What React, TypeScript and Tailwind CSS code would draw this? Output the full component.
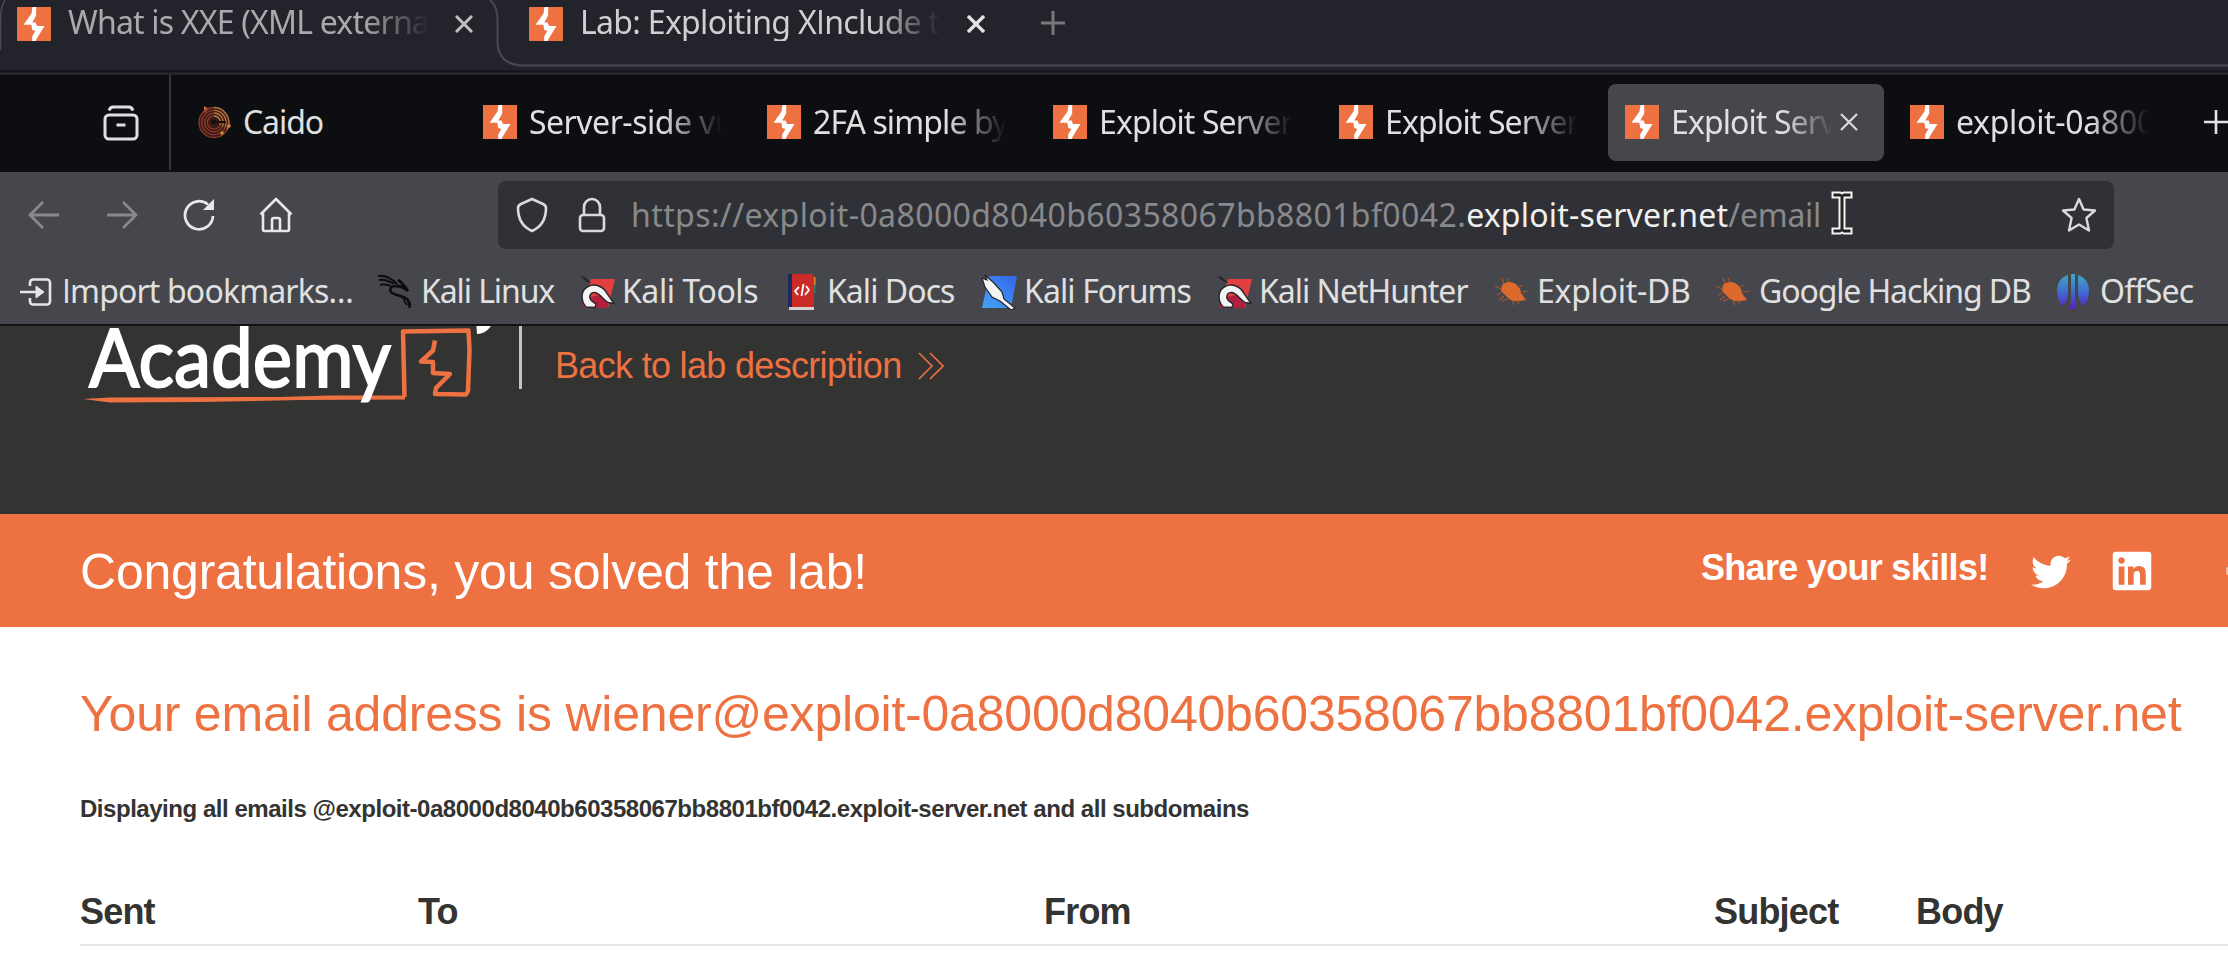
import React from "react";
import { FaTwitter, FaLinkedin } from "react-icons/fa";

function Burp({ className = "" }: { className?: string }) {
  return (
    <svg viewBox="0 0 34 34" className={"h-[34px] w-[34px] shrink-0 " + className}>
      <rect width="34" height="34" fill="#ee7142" />
      <path d="M15.500 0H19.200V8.500L15.300 15.500H18.600L20 19H27.500L19.800 31.500 18.600 34H15.200V29.500L18.400 24 15.300 23 14.300 17.800H6.500L14.500 6.500z" fill="#fff" />
    </svg>
  );
}

const X = ({ className, w = 3 }: { className: string; w?: number }) => (
  <svg viewBox="0 0 18 18" className={"h-[18px] w-[18px] shrink-0 " + className} fill="none" stroke="currentColor" strokeWidth={w}>
    <path d="M1 1l16 16M17 1L1 17" />
  </svg>
);

const Plus = ({ className, w = 2.4 }: { className: string; w?: number }) => (
  <svg viewBox="0 0 24 24" className={"h-6 w-6 shrink-0 " + className} fill="none" stroke="currentColor" strokeWidth={w}>
    <path d="M12 0v24M0 12h24" />
  </svg>
);

function Caido() {
  return (
    <svg viewBox="0 0 34 34" className="h-[34px] w-[34px] shrink-0" fill="none" strokeWidth="1.300">
      <circle cx="17" cy="17.500" r="15.500" fill="#3b1a17" />
      <path d="M7 1l5 3-5 4z" fill="#d06a3c" />
      <g stroke="#8c3a2b">
        <circle cx="17" cy="17.500" r="15" />
        <circle cx="17" cy="17.500" r="12.200" />
        <circle cx="17" cy="17.500" r="9.400" />
        <circle cx="17" cy="17.500" r="6.600" />
      </g>
      <path d="M17 2.500a15 15 0 0 1 13 22M17 5.300a12.200 12.200 0 0 1 11 17M17 8a9.400 9.400 0 0 1 8 14M17 11a6.600 6.600 0 0 1 6 9" stroke="#a8743f" />
      <circle cx="17" cy="17" r="2.500" fill="#111" />
      <path d="M20 16h9v2h-9z" fill="#15100e" />
      <circle cx="32" cy="21" r="1.800" fill="#c98a3c" />
      <circle cx="25" cy="28" r="1.800" fill="#c98a3c" />
    </svg>
  );
}

function Dragon() {
  return (
    <svg viewBox="0 0 36 36" className="h-9 w-9" fill="none" stroke="#0c0d10">
      <path d="M0 2c7-1 13 2 19 8M1 6c6-1 10 1 15 4M2 11c4-1 8 0 11 1" strokeWidth="2" />
      <path d="M20 6c4 2 6 5 10 11-4-4-7-5-12-5" strokeWidth="2.800" />
      <path d="M18 12c-5 0-7 3-5 6 3 4 13 3 17 8 1 2 1 5 2 8" strokeWidth="2.400" />
      <path d="M23 23c5 1 8 3 10 8M26 25c0 3 2 5 3 6" strokeWidth="1.800" />
    </svg>
  );
}

function KaliTools() {
  return (
    <svg viewBox="0 0 36 36" className="h-9 w-9">
      <path d="M11 5h24l-7 29H3z" fill="#e2403f" />
      <path d="M2 24l26-4v14H3z" fill="#b3203f" />
      <path d="M0 2l5 1 6 6-4-1z" fill="#23242a" />
      <path d="M6 33C0 26 1 16 8 12.500c8-4 16 1 19 7l7 10-6-1c-5-3-8-9-13-10-4-.5-6 3-5 6 1 3 4 4 6 5.500l-1 3.500z" fill="#f4f4f4" stroke="#26272c" strokeWidth="1.400" />
    </svg>
  );
}

function KaliDocs() {
  return (
    <svg viewBox="0 0 28 38" className="h-[38px] w-7">
      <path d="M0 1h4v33H0z" fill="#1e2a5e" />
      <path d="M4 1h20l2 2v31H4z" fill="#cb2a26" />
      <path d="M26 4h1.500v8H26z" fill="#d98a34" />
      <path d="M26 12h1.500v8H26z" fill="#3f7a5a" />
      <path d="M1 34h25v3H1z" fill="#d9cfcf" />
      <path d="M11 14l-4 4 3 4M18 13l3 4-4 5M15.500 11l-2 12" fill="none" stroke="#fff" strokeWidth="1.800" />
    </svg>
  );
}

function KaliForums() {
  return (
    <svg viewBox="0 0 36 36" className="h-9 w-9">
      <defs>
        <linearGradient id="kf" x1="0" y1="1" x2="1" y2="0">
          <stop offset="0" stopColor="#45a5f5" />
          <stop offset="1" stopColor="#3365e8" />
        </linearGradient>
      </defs>
      <path d="M7 2h28l-6 32H0z" fill="url(#kf)" />
      <path d="M0 4l5 2-2-5 9 8 8 9 2 7 11 9-4 2-11-9-8-4-7-10z" fill="#f4f4f4" stroke="#26272c" strokeWidth="1.200" />
    </svg>
  );
}

function Bug() {
  return (
    <svg viewBox="0 0 34 30" className="h-[30px] w-[34px]">
      <path d="M7 8c4-4 10-4 15 0l3 4 1 4 5 7-6 1c-6 1-11-1-14-5l-5-5z" fill="#dd6a2c" />
      <path d="M9 7L7 1M14 5L12 1M24 10l4-2M27 15l6-1M6 12l-6-3M6 16l-4 2M9 19l-5 4M13 22l-6 2M17 23l2 5M22 23l2 4" stroke="#a8562c" strokeWidth="1.100" />
    </svg>
  );
}

function OffSec() {
  return (
    <svg viewBox="0 0 32 36" className="h-9 w-8">
      <defs>
        <linearGradient id="os" x1="0" y1="0" x2="0" y2="1">
          <stop offset="0" stopColor="#3fa9c0" />
          <stop offset="0.550" stopColor="#3f68d0" />
          <stop offset="1" stopColor="#5a1fc8" />
        </linearGradient>
      </defs>
      <path d="M11 1C4 3 0 9 0 17c0 6 2 11 6 15 3-4 5-8 5-13zM21 1c7 2 11 8 11 16 0 6-2 11-6 15-3-4-5-8-5-13zM14 0h4v27l1 8h-6l1-8z" fill="url(#os)" />
    </svg>
  );
}

function Import() {
  return (
    <svg viewBox="0 0 32 28" className="h-7 w-8" fill="none" stroke="#e6e6e6" strokeWidth="2.600">
      <path d="M10 8V4.500a3 3 0 0 1 3-3h14a3 3 0 0 1 3 3v19a3 3 0 0 1-3 3H13a3 3 0 0 1-3-3V20M0 14h17" />
      <path d="M16 8l8 6-8 6z" fill="#e6e6e6" strokeWidth="1" />
    </svg>
  );
}

// Plain, serif-less capital I.
const I = () => <span className="font-['Open_Sans',sans-serif]">I</span>;

const tabs = [
  { t: "Server-side vulnerabilities", c: "w-[284px]", s: "tracking-[-0.5px]" },
  { t: "2FA simple bypass", c: "w-[286px]", s: "tracking-[-0.9px]" },
  { t: "Exploit Server:", c: "w-[286px]", s: "tracking-[-0.9px]" },
  { t: "Exploit Server:", c: "w-[286px]", s: "tracking-[-0.9px]" },
];

const bookmarks = [
  { t: <><I />mport bookmarks…</>, i: <Import />, c: "w-[358px] tracking-[-0.85px]", g: "w-[42px]" },
  { t: "Kali Linux", i: <Dragon />, c: "w-[202px] tracking-[-1.09px]", g: "w-[43px]" },
  { t: "Kali Tools", i: <KaliTools />, c: "w-[208px] tracking-[-0.44px]", g: "w-[42px]" },
  { t: "Kali Docs", i: <KaliDocs />, c: "w-[194px] tracking-[-0.95px]", g: "w-[39px]" },
  { t: "Kali Forums", i: <KaliForums />, c: "w-[235px] tracking-[-0.89px]", g: "w-[42px]" },
  { t: "Kali NetHunter", i: <KaliTools />, c: "w-[278px] tracking-[-1px]", g: "w-[42px]" },
  { t: "Exploit-DB", i: <Bug />, c: "w-[221px] tracking-[-0.27px]", g: "w-[42px]" },
  { t: "Google Hacking DB", i: <Bug />, c: "w-[341px] tracking-[-1.12px]", g: "w-[43px]" },
  { t: "OffSec", i: <OffSec />, c: "w-[140px] tracking-[-0.75px]", g: "w-[43px]" },
];

const fade = "[mask-image:linear-gradient(to_right,black_68%,transparent_98%)]";

export default function App() {
  return (
    <div className="flex h-[966px] w-[2228px] flex-col overflow-hidden bg-white font-['Noto_Sans',sans-serif] text-[32px] whitespace-nowrap text-[#e0e0e1]">
      <div className="relative flex h-[75px] shrink-0 items-start bg-[#23242b] pl-[17px]">
        <svg viewBox="0 0 2228 75" className="absolute top-0 left-0 h-[75px] w-[2228px]" fill="none">
          <path d="M490 0C495 4 497.500 10 497.500 20V42C497.500 57 507 65 522 65.500H2228" stroke="#4a4b50" strokeWidth="2" />
          <path d="M5 0C1 6 .5 12 .5 20V50" stroke="#4a4b50" strokeWidth="1.500" />
          <path d="M0 71.500H2228" stroke="#121318" strokeWidth="2" />
          <path d="M0 73.500H2228" stroke="#26272d" strokeWidth="2" />
        </svg>
        <Burp className="mt-[6.500px]" />
        <div className="ml-[17px] h-[41px] w-[361px] overflow-hidden leading-[43px] tracking-[-0.8px] text-[#a9aaac] [mask-image:linear-gradient(to_right,black_82%,transparent_100%)]">What is XXE (XML external</div>
        <X className="mt-[15px] ml-[26px] text-[#c0c0c1]" />
        <Burp className="mt-[6.500px] ml-[56px]" />
        <div className="ml-[17px] h-[41px] w-[360px] overflow-hidden leading-[43px] tracking-[-0.7px] text-[#d0d0d1] [mask-image:linear-gradient(to_right,black_82%,transparent_100%)]">Lab: Exploiting X<I />nclude to</div>
        <X className="mt-[15px] ml-[27px] text-[#e4e4e5]" w={3.4} />
        <Plus className="mt-[11px] ml-[56px] text-[#77787b]" w={3} />
      </div>

      <div className="flex h-[97px] shrink-0 bg-[#0d0e12] pb-[3px]">
        <div className="flex h-[95px] w-[171px] shrink-0 items-center justify-end border-r-2 border-[#38393d] pr-[30px]">
          <svg viewBox="0 0 36 36" className="h-9 w-9" fill="none" stroke="#e0e0e0" strokeWidth="3">
            <path d="M6 5.500C7 3 8 2 10 2h16c2 0 3 1 4 3.500" />
            <rect x="2" y="10" width="32" height="24" rx="4" />
            <path d="M13.500 20h9" />
          </svg>
        </div>
        <div className="flex h-full w-[312px] shrink-0 items-center pl-[26px]">
          <Caido />
          <span className="ml-[12px] tracking-[-1.1px]">Caido</span>
        </div>
        {tabs.map((t, i) => (
          <div key={i} className={"flex h-full shrink-0 items-center " + t.c}>
            <Burp />
            <div className={"ml-[12px] w-[197px] overflow-hidden " + t.s + " " + fade}>{t.t}</div>
          </div>
        ))}
        <div className="-ml-[17px] flex h-[77px] w-[276px] shrink-0 items-center self-center rounded-lg bg-[#46474c] pl-[17px]">
          <Burp />
          <div className={"ml-[12px] w-[165px] overflow-hidden tracking-[-0.9px] " + fade}>Exploit Server:</div>
          <X className="ml-[4px] text-[#dcdcdd]" w={2.2} />
        </div>
        <div className="flex h-full items-center">
          <Burp className="ml-[26px]" />
          <div className={"ml-[12px] w-[197px] shrink-0 overflow-hidden tracking-[-0.3px] " + fade}>exploit-0a8000</div>
          <Plus className="ml-[51px] text-[#e4e4e5]" w={2.6} />
        </div>
      </div>

      <div className="flex h-[152px] shrink-0 flex-col bg-[#46474c]">
        <div className="flex h-[85px] shrink-0 items-center">
          <svg viewBox="0 0 32 32" className="ml-[28px] h-8 w-8" fill="none" stroke="#88898c" strokeWidth="2.800"><path d="M31 16H2M15 3L2 16l13 13" /></svg>
          <svg viewBox="0 0 32 32" className="ml-[46px] h-8 w-8" fill="none" stroke="#88898c" strokeWidth="2.800"><path d="M1 16h29M17 3l13 13-13 13" /></svg>
          <svg viewBox="0 0 32 34" className="ml-[45px] h-[34px] w-8" fill="none" stroke="#e8e8e8" strokeWidth="2.800"><path d="M30 18a14 14 0 1 1-5-11.500" /><path d="M31 1v11H20z" fill="#e8e8e8" stroke="none" /></svg>
          <svg viewBox="0 0 34 36" className="ml-[44px] h-9 w-[34px]" fill="none" stroke="#e8e8e8" strokeWidth="2.600" strokeLinejoin="round"><path d="M1.500 17.500L17 2l15.500 15.500M4 15v17.500a1.500 1.500 0 0 0 1.500 1.500h23a1.500 1.500 0 0 0 1.500-1.500V15M13 34V23a2 2 0 0 1 2-2h4a2 2 0 0 1 2 2v11" /></svg>
          <div className="relative ml-[205px] flex h-[68px] w-[1616px] items-center rounded-lg bg-[#303136]">
            <svg viewBox="0 0 32 36" className="ml-[18px] h-9 w-8" fill="none" stroke="#dadada" strokeWidth="2.600" strokeLinejoin="round"><path d="M16 2l11 5c2 1 3 2 3 4 0 11-5 19-14 23C7 30 2 22 2 11c0-2 1-3 3-4z" /></svg>
            <svg viewBox="0 0 28 36" className="ml-[30px] h-9 w-7" fill="none" stroke="#dadada" strokeWidth="2.600"><path d="M6 18V10a8 8 0 0 1 16 0v8" /><rect x="2" y="18" width="24" height="16" rx="3" /></svg>
            <div className="ml-[25px] w-[1430px] pt-px text-[#88898b]">
              <span className="tracking-[0.4px]">https://exploit-0a8000d8040b60358067bb8801bf0042.</span>
              <span className="tracking-[0.19px] text-[#f0f0f0]">exploit-server.net</span>
              <span className="tracking-[-0.25px]">/email</span>
            </div>
            <svg viewBox="0 0 36 36" className="h-9 w-9 shrink-0" fill="none" stroke="#dadada" strokeWidth="2.400" strokeLinejoin="round"><path d="M18 2l4.600 10.500 11.400 1-8.600 7.500 2.600 12.500L18 27.500 8 33.500 10.600 21 2 13.500l11.400-1z" /></svg>
            <svg viewBox="0 0 22 44" className="absolute top-[10px] left-[1333px] h-11 w-[22px]"><path d="M1.500 1.500h8l1.500 1 1.500-1h8v5h-7v31h7v5h-8l-1.500-1-1.500 1h-8v-5h7v-31h-7z" fill="#222" stroke="#f4f4f4" strokeWidth="2" /></svg>
          </div>
        </div>
        <div className="flex h-[67px] items-center pl-[20px]">
          {bookmarks.map((b, i) => (
            <div key={i} className={"flex shrink-0 items-center " + b.c}>
              <div className={"shrink-0 pt-[3px] " + b.g}>{b.i}</div>
              <span>{b.t}</span>
            </div>
          ))}
        </div>
      </div>

      <div className="flex h-[190px] shrink-0 items-start border-t-2 border-[#111215] bg-[#333332] pl-[80px] font-['Liberation_Sans',sans-serif]">
        <svg viewBox="80 326 420 80" className="h-20 w-[420px]">
          <path d="M83 399L110 397.500 280 397 330 395.500H405V399.500L300 400 200 402 110 402.500z" fill="#ee7142" />
          <path d="M404.500 397L403 331.500l65.500-1L469.500 350l-1.500 41-2 3.500-31-.5 1-6 14-14-17-1V362l-12-.5 12-11 2-10" fill="none" stroke="#ee7142" strokeWidth="4.500" strokeLinejoin="round" />
          <text x="89" y="387" textLength="302" lengthAdjust="spacingAndGlyphs" fontSize="82" fontFamily="Lato, sans-serif" fill="#fff" stroke="#fff" strokeWidth="2">Academy</text>
          <path d="M476.500 326H491c-3 4-7 8-14 8z" fill="#fff" />
        </svg>
        <div className="ml-[19px] h-[63px] w-[3px] bg-[#c2c2c1]" />
        <div className="mt-[20px] ml-[33px] w-[346px] text-[36px] leading-[40px] tracking-[-0.68px] text-[#ee7142]">Back to lab description</div>
        <svg viewBox="0 0 26 28" className="mt-[26px] ml-[17px] h-7 w-[26px]" fill="none" stroke="#ee7142" strokeWidth="1.600"><path d="M1 1l13 13L1 27M12 1l13 13-13 13" /></svg>
      </div>

      <div className="flex h-[113px] shrink-0 items-center bg-[#ee7142] pl-[80px] font-['Liberation_Sans',sans-serif] text-white">
        <div className="w-[1621px] pt-[3px] text-[50px] tracking-[-0.22px]">Congratulations, you solved the lab!</div>
        <div className="w-[330px] pb-[6px] text-[36px] font-bold tracking-[-0.7px]">Share your skills!</div>
        <FaTwitter className="mt-[2px] h-10 w-10" />
        <FaLinkedin className="ml-[41px] h-[44px] w-[40px]" />
        <div className="ml-[74px] h-[8px] w-[2px] rounded-l-sm bg-[#f6b8a0]" />
      </div>

      <div className="flex flex-1 flex-col pl-[80px] font-['Liberation_Sans',sans-serif] text-[#333332]">
        <div className="mt-[58px] text-[50px] leading-[58px] tracking-[-0.21px] text-[#ee7142]">Your email address is wiener@exploit-0a8000d8040b60358067bb8801bf0042.exploit-server.net</div>
        <div className="mt-[52px] text-[24px] leading-[28px] font-bold tracking-[-0.465px]">Displaying all emails @exploit-0a8000d8040b60358067bb8801bf0042.exploit-server.net and all subdomains</div>
        <div className="mt-[68px] flex h-[55px] border-b-2 border-[#e6e6e6] text-[36px] leading-[42px] font-bold tracking-[-0.8px]">
          <div className="w-[338px]">Sent</div>
          <div className="w-[626px]">To</div>
          <div className="w-[670px]">From</div>
          <div className="w-[202px]">Subject</div>
          <div>Body</div>
        </div>
      </div>
    </div>
  );
}
